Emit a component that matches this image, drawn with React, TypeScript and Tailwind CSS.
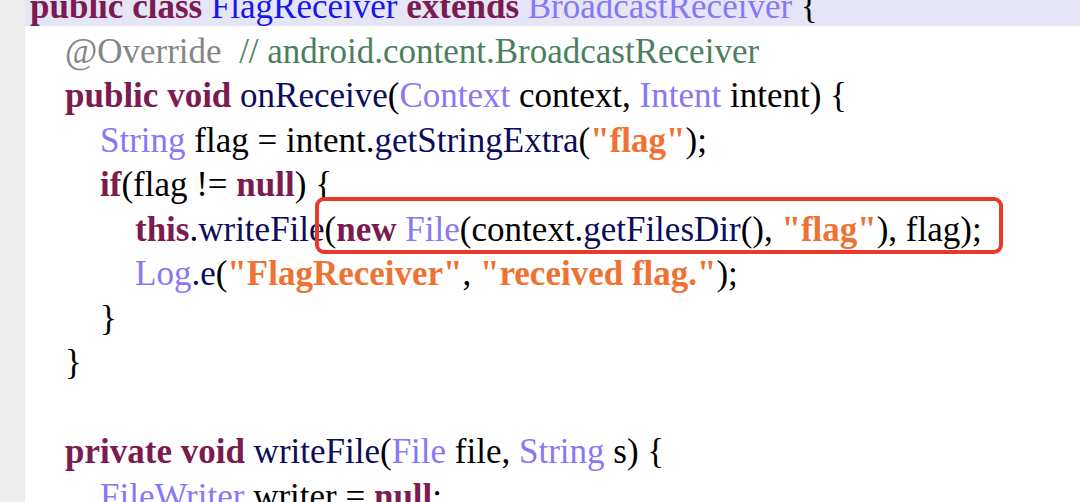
import React from "react";

type Tok = [string, string];

const KW = "text-[#7b1b4f] font-bold";
const CLS = "text-[#1616ee]";
const TYPE = "text-[#8977f6]";
const FN = "text-[#0c0c5c]";
const STR = "text-[#f07232] font-bold";
const CMT = "text-[#4c7f5e]";
const ANN = "text-[#858585]";
const TXT = "text-black";

const LINES: { indent: number; toks: Tok[] }[] = [
  {
    indent: 0,
    toks: [
      [KW, "public class "],
      [CLS, "FlagReceiver "],
      [KW, "extends "],
      [TYPE, "BroadcastReceiver"],
      [TXT, " {"],
    ],
  },
  {
    indent: 1,
    toks: [
      [ANN, "@Override "],
      [CMT, " // android.content.BroadcastReceiver"],
    ],
  },
  {
    indent: 1,
    toks: [
      [KW, "public void "],
      [FN, "onReceive"],
      [TXT, "("],
      [TYPE, "Context"],
      [TXT, " context, "],
      [TYPE, "Intent"],
      [TXT, " intent) {"],
    ],
  },
  {
    indent: 2,
    toks: [
      [TYPE, "String"],
      [TXT, " flag = intent."],
      [FN, "getStringExtra"],
      [TXT, "("],
      [STR, "\"flag\""],
      [TXT, ");"],
    ],
  },
  {
    indent: 2,
    toks: [
      [KW, "if"],
      [TXT, "(flag != "],
      [KW, "null"],
      [TXT, ") {"],
    ],
  },
  {
    indent: 3,
    toks: [
      [KW, "this"],
      [TXT, "."],
      [FN, "writeFile"],
      [TXT, "("],
      [KW, "new "],
      [TYPE, "File"],
      [TXT, "(context."],
      [FN, "getFilesDir"],
      [TXT, "(), "],
      [STR, "\"flag\""],
      [TXT, "), flag);"],
    ],
  },
  {
    indent: 3,
    toks: [
      [TYPE, "Log"],
      [FN, ".e"],
      [TXT, "("],
      [STR, "\"FlagReceiver\""],
      [TXT, ", "],
      [STR, "\"received flag.\""],
      [TXT, ");"],
    ],
  },
  { indent: 2, toks: [[TXT, "}"]] },
  { indent: 1, toks: [[TXT, "}"]] },
  { indent: 0, toks: [] },
  {
    indent: 1,
    toks: [
      [KW, "private void "],
      [FN, "writeFile"],
      [TXT, "("],
      [TYPE, "File"],
      [TXT, " file, "],
      [TYPE, "String"],
      [TXT, " s) {"],
    ],
  },
  {
    indent: 2,
    toks: [
      [TYPE, "FileWriter"],
      [TXT, " writer = "],
      [KW, "null"],
      [TXT, ";"],
    ],
  },
];

const INDENT_CLASSES = ["pl-[5px]", "pl-[40px]", "pl-[75px]", "pl-[110px]"];

const App: React.FC = () => {
  /* Functions */
  const renderLine = (line: { indent: number; toks: Tok[] }, index: number): React.ReactNode => (
    <div
      key={index}
      className={`h-[44.5px] whitespace-pre ${INDENT_CLASSES[line.indent]} ${
        index === 0 ? "bg-[linear-gradient(to_bottom,#e5e5f6_41px,transparent_41px)]" : ""
      }`}
    >
      {line.toks.length === 0 ? " " : line.toks.map(([cls, text], i) => (
        <span key={i} className={cls}>
          {text}
        </span>
      ))}
    </div>
  );

  /* Output */
  return (
    <div className="w-[1080px] h-[502px] overflow-hidden bg-white flex">
      <div className="w-[25px] shrink-0 bg-[#ececec]" />
      <div className="relative flex-1">
        <div className="-mt-[15px] font-['Liberation_Serif',serif] text-[35px] leading-[44.5px]">
          {LINES.map((line, i) => renderLine(line, i))}
        </div>
        <div className="absolute left-[290px] top-[197px] w-[688px] h-[57px] rounded-[9px] border-[4px] border-[#e8392b]" />
      </div>
    </div>
  );
};

export default App;
